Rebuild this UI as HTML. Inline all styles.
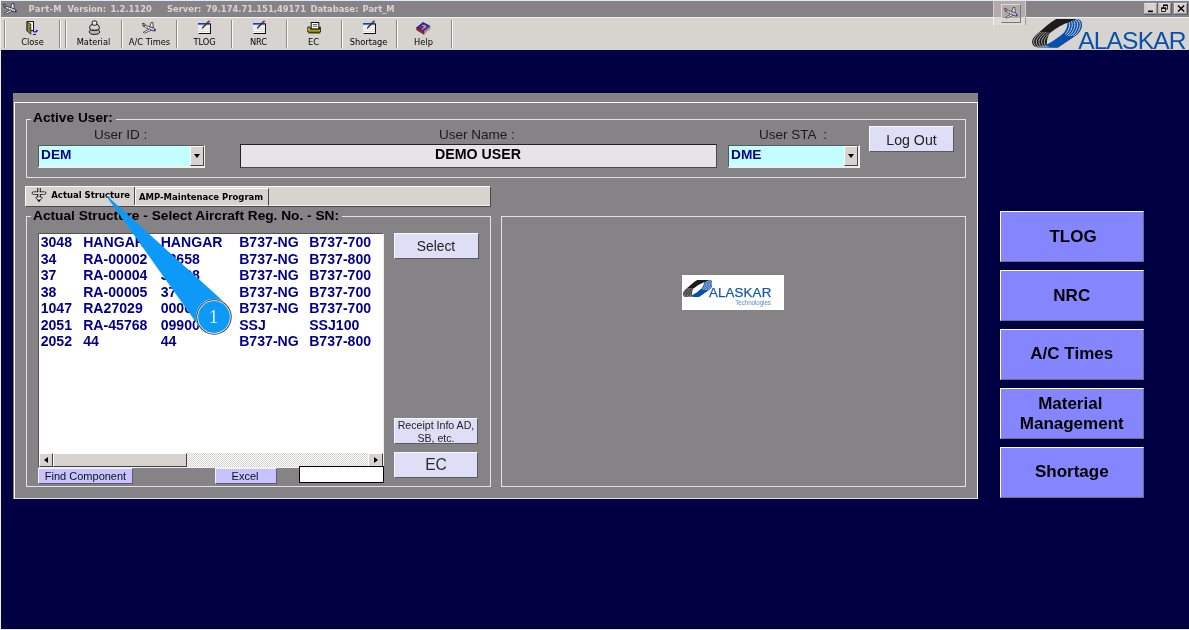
<!DOCTYPE html>
<html>
<head>
<meta charset="utf-8">
<title>Part-M</title>
<style>
html,body{margin:0;padding:0;}
body{width:1189px;height:630px;overflow:hidden;background:#000042;position:relative;will-change:transform;font-family:"Liberation Sans",sans-serif;}
.abs{position:absolute;box-sizing:border-box;}
#titlebar{left:0;top:0;width:1189px;height:17px;background:#858385;border-top:1.300px solid #dcebfa;}
#titletext{left:29px;top:2px;height:13px;line-height:13px;font-family:"DejaVu Sans Condensed","DejaVu Sans","Liberation Sans",sans-serif;font-weight:bold;font-size:9.3px;color:#d8d5d0;white-space:pre;}
#toolbar{left:0;top:17px;width:1189px;height:33px;background:#d7d4cf;border-top:1px solid #f4f3f1;}
.tb{top:20px;height:28px;width:55px;text-align:center;font-family:"DejaVu Sans Condensed","Liberation Sans",sans-serif;font-size:9.2px;color:#000;}
.tb span{position:absolute;left:0;right:0;top:16px;line-height:12px;}
.sep{top:20px;width:2px;height:28px;border-left:1px solid #8c8a86;border-right:1px solid #fbfaf9;}
.cap{top:3px;width:13px;height:11px;background:#d7d4cf;border:1px solid;border-color:#fff #404040 #404040 #fff;box-shadow:inset -1px -1px 0 #858385;}
#panel{left:13px;top:93px;width:965px;height:406px;background:#858385;}
.gb{border:1px solid #e4e2e4;}
.gbt{font-weight:bold;font-size:13.7px;color:#000;background:#858385;line-height:15px;white-space:pre;}
.lbl{font-size:13.500px;color:#1a1a1a;line-height:15px;white-space:pre;}
.combo{background:#c3ffff;border:1px solid #5a585a;border-right:2px solid #f1efee;border-bottom:2px solid #f1efee;font-weight:bold;font-size:13.700px;color:#00008b;line-height:18.500px;padding-left:2px;}
.drop{width:14px;background:#d7d4cf;border:1px solid;border-color:#fbfbfb #45434a #45434a #fbfbfb;}
.drop:after{content:"";position:absolute;left:2.500px;top:6.500px;border:3.500px solid transparent;border-top:4px solid #000;border-bottom:none;}
.btn{background:#dedff7;border:1px solid;border-color:#f8f8ff #5c5a5c #5c5a5c #f8f8ff;color:#222;text-align:center;}
.btn2{background:#c6c3ff;border:1px solid;border-color:#f2f2ff #5c5a6c #5c5a6c #f2f2ff;color:#111;text-align:center;font-size:11px;line-height:12px;}
.big{left:1000px;width:143.500px;height:50.500px;background:#8585ff;border:1.500px solid;border-color:#fdfdfd #6e6e78 #6e6e78 #fdfdfd;font-weight:bold;font-size:17px;color:#000;text-align:center;}
#list{left:38px;top:233px;width:346px;height:235px;background:#fff;border:1px solid;border-color:#555355 #efefef #efefef #555355;}
.row{left:40.700px;height:17px;line-height:17px;font-weight:bold;font-size:14.100px;color:#00008b;white-space:pre;}
.row i{font-style:normal;position:absolute;top:0;}
.tabt{font-family:"DejaVu Sans Condensed","Liberation Sans",sans-serif;font-weight:bold;font-size:9.450px;line-height:12px;color:#000;white-space:pre;}
.sb{background:#d7d4cf;border:1px solid;border-color:#fff #404040 #404040 #fff;}
</style>
</head>
<body>
<!-- title bar -->
<div id="titlebar" class="abs"></div>
<div id="titletext" class="abs" style="left:0;width:420px;"><span class="abs" style="left:28.600px;letter-spacing:.3px">Part-M</span><span class="abs" style="left:67.500px">Version:</span><span class="abs" style="left:110.500px">1.2.1120</span><span class="abs" style="left:167px">Server:</span><span class="abs" style="left:206px">79.174.71.151,49171</span><span class="abs" style="left:310.500px">Database:</span><span class="abs" style="left:362.500px">Part_M</span></div>
<!-- toolbar -->
<div id="toolbar" class="abs"></div>


<div class="abs sep" style="left:4px;"></div>
<div class="abs sep" style="left:59px;"></div>
<div class="abs sep" style="left:65px;"></div>
<div class="abs sep" style="left:121px;"></div>
<div class="abs sep" style="left:176px;"></div>
<div class="abs sep" style="left:231px;"></div>
<div class="abs sep" style="left:286px;"></div>
<div class="abs sep" style="left:341px;"></div>
<div class="abs sep" style="left:396px;"></div>
<div class="abs sep" style="left:451px;"></div>

<div class="abs tb" style="left:5px;"><svg class="abs" style="left:21px;top:1px" width="14" height="15" viewBox="0 0 14 15"><rect x="1" y=".6" width="6.500" height="9" fill="#fff" stroke="#111" stroke-width="1"/><path d="M1.200 1.200 L4.800 3 L4.800 13.200 L1.200 10.200 Z" fill="#8c8a1c" stroke="#222" stroke-width=".8"/><rect x="3.500" y="7" width=".9" height=".9" fill="#111"/><path d="M7 10.300 C8.500 11.300 10 11 11 10" stroke="#1a1ad8" stroke-width="1.200" fill="none"/><path d="M10 8.600 L12.200 9.600 L10.600 11.300 Z" fill="#1a1ad8"/><path d="M7 13.500h3" stroke="#1a1ad8" stroke-width="1.100"/></svg><span>Close</span></div>
<div class="abs tb" style="left:66px;"><svg class="abs" style="left:22px;top:0px" width="13" height="15" viewBox="0 0 13 15"><ellipse cx="6.500" cy="11.800" rx="5.200" ry="2.600" fill="#b8b8b8" stroke="#111" stroke-width="1"/><path d="M2.200 9.500 C1 7 2 5 4 4.500 L9 4.500 C11 5 12 7 10.800 9.500 C9 11 4 11 2.200 9.500Z" fill="#d4d4d4" stroke="#111" stroke-width="1"/><rect x="4.200" y="1" width="4.600" height="4.200" rx="1.300" fill="#ececec" stroke="#111" stroke-width="1"/><path d="M4 9.300 C5.500 10 7.500 10 9 9.300" stroke="#666" stroke-width=".9" fill="none"/></svg><span>Material</span></div>
<div class="abs tb" style="left:122px;"><svg class="abs" style="left:20px;top:2px" width="14" height="11.500" viewBox="0 0 14 11.500"><path d="M.4 1.300 L2.500 1.600 L4 4.300 L1.600 4.600 Z" fill="#c8c8c8" stroke="#222" stroke-width=".8"/><path d="M7.600 4.600 L9.200 .4 L10.900 .5 L11.200 5.800 Z" fill="#f0f0f0" stroke="#222" stroke-width=".8"/><path d="M1.400 3.600 C3 3.100 9 4.900 12.500 6.700 C14.300 7.700 14.100 9.100 12.500 9 C9 8.700 3 5.900 1.400 3.600Z" fill="#fff" stroke="#222" stroke-width=".8"/><path d="M7.400 6.900 L1.200 10.300 L2.800 11.100 L9.300 8.100 Z" fill="#fff" stroke="#333" stroke-width=".8"/><path d="M5.200 5.200 L11.200 7.700" stroke="#2828e0" stroke-width=".8" stroke-dasharray=".9 1"/><circle cx="12.600" cy="8" r=".9" fill="#2020e8"/></svg><span>A/C Times</span></div>
<div class="abs tb" style="left:177px;"><svg class="abs" style="left:21px;top:0px" width="14" height="14" viewBox="0 0 14 14"><rect x="0" y="3" width="12.500" height="10.500" fill="#fff"/><rect x="0" y="3" width="12.300" height="1.800" fill="#1a3ad8"/><rect x="0" y="4.800" width="12.300" height="1" fill="#b8e6f0"/><path d="M0 7.800h12M0 9.700h12M0 11.600h12" stroke="#cfcfcf" stroke-width=".8"/><path d="M12.500 3.500V13.500M.5 13.500H13" stroke="#111" stroke-width="1"/><path d="M4.700 7.600 L11 1.300" stroke="#3c3a10" stroke-width="1.500"/><path d="M10.200 2.100 L11.600 .7" stroke="#e01818" stroke-width="1.600"/><rect x="4" y="7.600" width="1" height="1" fill="#111"/></svg><span>TLOG</span></div>
<div class="abs tb" style="left:232px;"><svg class="abs" style="left:21px;top:0px" width="14" height="14" viewBox="0 0 14 14"><rect x="0" y="3" width="12.500" height="10.500" fill="#fff"/><rect x="0" y="3" width="12.300" height="1.800" fill="#1a3ad8"/><rect x="0" y="4.800" width="12.300" height="1" fill="#b8e6f0"/><path d="M0 7.800h12M0 9.700h12M0 11.600h12" stroke="#cfcfcf" stroke-width=".8"/><path d="M12.500 3.500V13.500M.5 13.500H13" stroke="#111" stroke-width="1"/><path d="M4.700 7.600 L11 1.300" stroke="#3c3a10" stroke-width="1.500"/><path d="M10.200 2.100 L11.600 .7" stroke="#e01818" stroke-width="1.600"/><rect x="4" y="7.600" width="1" height="1" fill="#111"/></svg><span style="left:-2px">NRC</span></div>
<div class="abs tb" style="left:287px;"><svg class="abs" style="left:20px;top:2px" width="14" height="12" viewBox="0 0 14 12"><rect x="4.200" y=".5" width="7.600" height="6.500" fill="#fff" stroke="#111" stroke-width="1"/><path d="M5.800 2.500h4.400M5.800 4.300h4.400" stroke="#555" stroke-width=".9"/><path d="M.8 5 H3.200 V7.300 H12.600 V5 H13.400 V10 H.8 Z" fill="#e2de10" stroke="#111" stroke-width=".9"/><path d="M1.500 10.800 H13.200" stroke="#3a3a00" stroke-width="1.400"/><path d="M2 8.700H12" stroke="#8c8a10" stroke-width=".8"/></svg><span style="left:-2px">EC</span></div>
<div class="abs tb" style="left:342px;"><svg class="abs" style="left:21px;top:0px" width="14" height="14" viewBox="0 0 14 14"><rect x="0" y="3" width="12.500" height="10.500" fill="#fff"/><rect x="0" y="3" width="12.300" height="1.800" fill="#1a3ad8"/><rect x="0" y="4.800" width="12.300" height="1" fill="#b8e6f0"/><path d="M0 7.800h12M0 9.700h12M0 11.600h12" stroke="#cfcfcf" stroke-width=".8"/><path d="M12.500 3.500V13.500M.5 13.500H13" stroke="#111" stroke-width="1"/><path d="M4.700 7.600 L11 1.300" stroke="#3c3a10" stroke-width="1.500"/><path d="M10.200 2.100 L11.600 .7" stroke="#e01818" stroke-width="1.600"/><rect x="4" y="7.600" width="1" height="1" fill="#111"/></svg><span style="left:-2px">Shortage</span></div>
<div class="abs tb" style="left:397px;"><svg class="abs" style="left:19px;top:2px" width="15" height="13" viewBox="0 0 15 13"><path d="M.8 5.500 L7 .6 L14 4.200 L8 9.600 Z" fill="#4a2cc8" stroke="#1a1470" stroke-width=".9"/><path d="M.8 5.500 L8 9.600 L8 12.200 L.8 8 Z" fill="#c02828" stroke="#401010" stroke-width=".7"/><path d="M8 9.600 L14 4.200 L14 6.600 L8 12.200 Z" fill="#f0f0f4" stroke="#444" stroke-width=".6"/><path d="M8.300 10.600 L13.800 5.500" stroke="#c02828" stroke-width=".7"/><text x="5.300" y="7.800" font-family="Liberation Sans,sans-serif" font-weight="bold" font-size="7.500" fill="#ffe818" transform="rotate(28 7 5)">?</text></svg><span style="left:-2px">Help</span></div>

<!-- title icon -->
<svg class="abs" style="left:3px;top:3px" width="14" height="11.500" viewBox="0 0 14 11.500"><path d="M.4 1.300 L2.500 1.600 L4 4.300 L1.600 4.600 Z" fill="#c8c8c8" stroke="#222" stroke-width=".8"/><path d="M7.600 4.600 L9.200 .4 L10.900 .5 L11.200 5.800 Z" fill="#f0f0f0" stroke="#222" stroke-width=".8"/><path d="M1.400 3.600 C3 3.100 9 4.900 12.500 6.700 C14.300 7.700 14.100 9.100 12.500 9 C9 8.700 3 5.900 1.400 3.600Z" fill="#fff" stroke="#222" stroke-width=".8"/><path d="M7.400 6.900 L1.200 10.300 L2.800 11.100 L9.300 8.100 Z" fill="#fff" stroke="#333" stroke-width=".8"/><path d="M5.200 5.200 L11.200 7.700" stroke="#2828e0" stroke-width=".8" stroke-dasharray=".9 1"/><circle cx="12.600" cy="8" r=".9" fill="#2020e8"/></svg>

<!-- floating plane button -->
<div class="abs" style="left:993px;top:1px;width:33px;height:16px;background:#b3abaa;border-left:1px solid #cfc9c8;border-right:1px solid #cfc9c8;"></div>
<div class="abs" style="left:993px;top:17px;width:33px;height:8px;background:#dedbd7;border-left:1px solid #f6f5f3;border-right:1px solid #9c9a96;"></div>
<div class="abs" style="left:1001px;top:3.500px;width:20px;height:19.500px;background:linear-gradient(#b2aaae 0,#b2aaae 13px,#dad6d2 13px);border:1px solid;border-color:#dedad8 #77757a #77757a #dedad8;"></div>
<svg class="abs" style="left:1003.500px;top:7px" width="14" height="11.500" viewBox="0 0 14 11.500" opacity=".85"><path d="M.4 1.300 L2.500 1.600 L4 4.300 L1.600 4.600 Z" fill="#c8c8c8" stroke="#222" stroke-width=".8"/><path d="M7.600 4.600 L9.200 .4 L10.900 .5 L11.200 5.800 Z" fill="#f0f0f0" stroke="#222" stroke-width=".8"/><path d="M1.400 3.600 C3 3.100 9 4.900 12.500 6.700 C14.300 7.700 14.100 9.100 12.500 9 C9 8.700 3 5.900 1.400 3.600Z" fill="#fff" stroke="#222" stroke-width=".8"/><path d="M7.400 6.900 L1.200 10.300 L2.800 11.100 L9.300 8.100 Z" fill="#fff" stroke="#333" stroke-width=".8"/><path d="M5.200 5.200 L11.200 7.700" stroke="#2828e0" stroke-width=".8" stroke-dasharray=".9 1"/><circle cx="12.600" cy="8" r=".9" fill="#2020e8"/></svg>

<!-- caption buttons -->
<svg class="abs" style="left:1139px;top:0" width="50" height="17" viewBox="0 0 50 17">
<g>
<rect x="5.300" y="2.900" width="13.200" height="11.600" fill="#45434a"/><rect x="5.300" y="2.900" width="12.400" height="10.800" fill="#fff"/><rect x="6.200" y="3.800" width="11.500" height="9.900" fill="#86848a"/><rect x="6.200" y="3.800" width="10.700" height="9.100" fill="#d7d4cf"/>
<rect x="9" y="10.500" width="4.900" height="1.700" fill="#000"/>
<rect x="19.400" y="2.900" width="13.200" height="11.600" fill="#45434a"/><rect x="19.400" y="2.900" width="12.400" height="10.800" fill="#fff"/><rect x="20.300" y="3.800" width="11.500" height="9.900" fill="#86848a"/><rect x="20.300" y="3.800" width="10.700" height="9.100" fill="#d7d4cf"/>
<rect x="24.600" y="5.200" width="3.800" height="3.900" fill="none" stroke="#000" stroke-width=".8"/><rect x="24.200" y="4.600" width="4.600" height="1.400" fill="#000"/>
<rect x="22.700" y="8" width="3.800" height="3.500" fill="#d7d4cf" stroke="#000" stroke-width=".8"/><rect x="22.300" y="7.400" width="4.600" height="1.400" fill="#000"/>
<rect x="34.900" y="2.900" width="13.900" height="11.600" fill="#45434a"/><rect x="34.900" y="2.900" width="13.100" height="10.800" fill="#fff"/><rect x="35.800" y="3.800" width="12.200" height="9.900" fill="#86848a"/><rect x="35.800" y="3.800" width="11.400" height="9.100" fill="#d7d4cf"/>
<path d="M39 5.400 L45.200 11.500 M45.200 5.400 L39 11.500" stroke="#000" stroke-width="1.400"/>
</g>
</svg>

<!-- Alaskar logo top right -->
<svg class="abs" style="left:1025px;top:15px" width="70" height="37" viewBox="0 0 1189 628">
<defs>
<clipPath id="lgOuter"><path d="M530,68 L880,68 C940,75 965,115 965,165 C965,230 925,300 880,335 L560,552 L205,549 C150,545 120,505 120,452 C120,400 170,350 230,300 C320,225 420,130 530,68 Z"/></clipPath>
<clipPath id="lgBlue"><path d="M885,68 L722,132 L372,500 L205,549 L205,700 L1300,700 L1300,-100 L885,-100 Z"/></clipPath>
<clipPath id="lgL"><path d="M0,300 L300,285 L440,300 L440,700 L0,700 Z"/></clipPath>
<clipPath id="lgR"><path d="M1300,0 L640,0 L640,300 L720,355 L1300,340 Z"/></clipPath>
</defs>
<path d="M530,68 L880,68 C940,75 965,115 965,165 C965,230 925,300 880,335 L560,552 L205,549 C150,545 120,505 120,452 C120,400 170,350 230,300 C320,225 420,130 530,68 Z" fill="#1c1a1a"/>
<g clip-path="url(#lgBlue)"><path d="M530,68 L880,68 C940,75 965,115 965,165 C965,230 925,300 880,335 L560,552 L205,549 C150,545 120,505 120,452 C120,400 170,350 230,300 C320,225 420,130 530,68 Z" fill="#0651ad"/></g>
<path d="M722,132 C600,180 490,250 425,305 C385,360 362,440 372,500 C480,440 590,370 660,300 C705,250 722,190 722,132 Z" fill="#d7d4cf"/>
<g clip-path="url(#lgOuter)">
<g clip-path="url(#lgL)">
<path d="M357,215 C257,300 147,380 147,452 C147,505 177,545 232,549" fill="none" stroke="#d7d4cf" stroke-width="13"/>
<path d="M402,215 C302,300 192,380 192,452 C192,505 222,545 277,549" fill="none" stroke="#d7d4cf" stroke-width="13"/>
<path d="M447,215 C347,300 237,380 237,452 C237,505 267,545 322,549" fill="none" stroke="#d7d4cf" stroke-width="13"/>
<path d="M492,215 C392,300 282,380 282,452 C282,505 312,545 367,549" fill="none" stroke="#d7d4cf" stroke-width="13"/>
<path d="M537,215 C437,300 327,380 327,452 C327,505 357,545 412,549" fill="none" stroke="#d7d4cf" stroke-width="13"/>
</g>
<g clip-path="url(#lgR)"><g clip-path="url(#lgBlue)">
<path d="M853,68 C913,75 938,115 938,165 C938,230 898,300 853,335 L773,392" fill="none" stroke="#d7d4cf" stroke-width="16"/>
<path d="M808,68 C868,75 893,115 893,165 C893,230 853,300 808,335 L728,392" fill="none" stroke="#d7d4cf" stroke-width="16"/>
<path d="M763,68 C823,75 848,115 848,165 C848,230 808,300 763,335 L683,392" fill="none" stroke="#d7d4cf" stroke-width="16"/>
<path d="M718,68 C778,75 803,115 803,165 C803,230 763,300 718,335 L638,392" fill="none" stroke="#d7d4cf" stroke-width="16"/>
<path d="M673,68 C733,75 758,115 758,165 C758,230 718,300 673,335 L593,392" fill="none" stroke="#d7d4cf" stroke-width="16"/>
</g></g>
</g>
</svg>
<svg class="abs" style="left:1070px;top:22px" width="119" height="28" viewBox="0 0 119 28">
<text x="8.200" y="26.800" font-family="Liberation Sans, sans-serif" font-size="24.600" fill="#0651ad" textLength="108.300" lengthAdjust="spacing">ALASKAR</text>
</svg>

<!-- main panel -->
<div id="panel" class="abs"></div>
<div class="abs" style="left:14px;top:102px;width:964px;height:397px;border:1px solid #fbfbfb;border-bottom-color:#dcdcec;"></div>
<div class="abs" style="left:0;top:0;width:1px;height:630px;background:#eeeef2;"></div>
<div class="abs" style="left:0;top:629px;width:1189px;height:1px;background:#e6e6ee;"></div>

<!-- Active user group -->
<div class="abs gb" style="left:26px;top:119px;width:940px;height:59px;"></div>
<div class="abs gbt" style="left:31px;top:110.300px;padding:0 3px 0 2px;">Active User:</div>
<div class="abs lbl" style="left:94px;top:127px;">User ID :</div>
<div class="abs lbl" style="left:439px;top:127px;">User Name :</div>
<div class="abs lbl" style="left:759px;top:127px;">User STA  :</div>

<div class="abs combo" style="left:38px;top:145px;width:167px;height:23px;">DEM</div>
<div class="abs drop" style="left:190px;top:146px;height:20px;"></div>

<div class="abs" style="left:240px;top:144px;width:477px;height:24px;background:#e7e3e7;border:1px solid #222;border-right-color:#4a484a;border-bottom:1.500px solid #4a484a;font-weight:bold;font-size:14.200px;line-height:18px;color:#000;text-align:center;padding-right:1px;">DEMO USER</div>

<div class="abs combo" style="left:728px;top:145px;width:132px;height:23px;">DME</div>
<div class="abs drop" style="left:844px;top:146px;height:20px;"></div>

<div class="abs btn" style="left:869px;top:126px;width:85px;height:26px;font-size:14.200px;line-height:26px;">Log Out</div>

<!-- tab strip -->
<div class="abs" style="left:25px;top:186px;width:466px;height:21px;background:#d7d4cf;border:1px solid;border-color:#f8f8f8 #4a484a #4a484a #f8f8f8;box-shadow:inset 0 -1px 0 #f4f3f1;"></div>
<div class="abs" style="left:134px;top:187px;width:1px;height:18px;background:#4a484a;"></div>
<div class="abs" style="left:135px;top:188px;width:134px;height:18px;border:1px solid;border-color:#fff #4a484a transparent #fff;"></div>
<div class="abs" style="left:26px;top:204px;width:108px;height:2px;background:#d7d4cf;"></div>
<svg class="abs" style="left:31px;top:187px" width="16" height="15" viewBox="0 0 16 15"><path d="M7.100 3.500 H8.900 V13.200 L8 14.200 L7.100 13.200 Z" fill="#f4f4f4"/><path d="M2.300 4.900 H13.700 A1.200 1.200 0 0 1 13.700 7.300 H2.300 A1.200 1.200 0 0 1 2.300 4.900 Z" fill="#fff" stroke="#111" stroke-width=".9"/><path d="M5.500 10 H10.500 L11.300 10.800 L9.500 12.600 H6.500 L4.700 10.800 Z" fill="#f4f4f4" stroke="#111" stroke-width=".9"/><path d="M6.900 .9 V4.900 M9.100 .9 V4.900 M6.900 7.300 V10 M9.100 7.300 V10 M6.900 12.600 L8 14.400 L9.100 12.600" fill="none" stroke="#000" stroke-width="1.200"/><path d="M7.450 1.200 H8.550 V13 H7.450Z" fill="#e8e8e8"/></svg>
<div class="abs tabt" style="left:51.300px;top:189px;">Actual Structure</div>
<div class="abs tabt" style="left:139px;top:191px;">AMP-Maintenace Program</div>

<!-- Actual structure group -->
<div class="abs gb" style="left:26px;top:216px;width:465px;height:271px;"></div>
<div class="abs gbt" style="left:31px;top:208px;padding:0 3px 0 2px;">Actual Structure - Select Aircraft Reg. No. - SN:</div>

<div id="list" class="abs"></div>
<div class="abs row" style="top:234.2px;">3048<i style="left:42.500px">HANGAR</i><i style="left:120px">HANGAR</i><i style="left:198.500px">B737-NG</i><i style="left:268.500px">B737-700</i></div>
<div class="abs row" style="top:250.7px;">34<i style="left:42.500px">RA-00002</i><i style="left:120px">32658</i><i style="left:198.500px">B737-NG</i><i style="left:268.500px">B737-800</i></div>
<div class="abs row" style="top:267.2px;">37<i style="left:42.500px">RA-00004</i><i style="left:120px">32738</i><i style="left:198.500px">B737-NG</i><i style="left:268.500px">B737-700</i></div>
<div class="abs row" style="top:283.7px;">38<i style="left:42.500px">RA-00005</i><i style="left:120px">37660</i><i style="left:198.500px">B737-NG</i><i style="left:268.500px">B737-700</i></div>
<div class="abs row" style="top:300.2px;">1047<i style="left:42.500px">RA27029</i><i style="left:120px">00001</i><i style="left:198.500px">B737-NG</i><i style="left:268.500px">B737-700</i></div>
<div class="abs row" style="top:316.7px;">2051<i style="left:42.500px">RA-45768</i><i style="left:120px">09900</i><i style="left:198.500px">SSJ</i><i style="left:268.500px">SSJ100</i></div>
<div class="abs row" style="top:333.2px;">2052<i style="left:42.500px">44</i><i style="left:120px">44</i><i style="left:198.500px">B737-NG</i><i style="left:268.500px">B737-800</i></div>

<!-- h scrollbar -->
<div class="abs" style="left:39px;top:452.500px;width:344px;height:14px;background-color:#d7d4cf;background-image:linear-gradient(45deg,#fff 25%,transparent 25%,transparent 75%,#fff 75%),linear-gradient(45deg,#fff 25%,transparent 25%,transparent 75%,#fff 75%);background-size:2px 2px;background-position:0 0,1px 1px;"></div>
<div class="abs sb" style="left:39px;top:452.500px;width:14px;height:14px;"><div class="abs" style="left:4px;top:3px;border:3.500px solid transparent;border-right:4px solid #000;border-left:none;"></div></div>
<div class="abs sb" style="left:53px;top:452.500px;width:134px;height:14px;"></div>
<div class="abs sb" style="left:368px;top:452.500px;width:15px;height:14px;"><div class="abs" style="left:5px;top:3px;border:3.500px solid transparent;border-left:4px solid #000;border-right:none;"></div></div>

<div class="abs btn" style="left:394px;top:233px;width:85px;height:26px;font-size:13.800px;line-height:26px;padding-right:1px;">Select</div>
<div class="abs btn" style="left:394px;top:418px;width:84px;height:26px;font-size:10.600px;line-height:12.700px;padding-top:0;white-space:nowrap;">Receipt Info AD,<br>SB, etc.</div>
<div class="abs btn" style="left:394px;top:452px;width:84px;height:26px;font-size:15.600px;line-height:24.500px;color:#2c2c2c;">EC</div>

<div class="abs btn2" style="left:38px;top:468px;width:95px;height:16px;line-height:14.500px;">Find Component</div>
<div class="abs btn2" style="left:215px;top:468px;width:62px;height:16px;line-height:14.500px;padding-right:2px;">Excel</div>
<div class="abs" style="left:299px;top:466px;width:85px;height:17px;background:#fff;border:1px solid #000;"></div>

<!-- right group -->
<div class="abs gb" style="left:501px;top:216px;width:465px;height:271px;"></div>
<div class="abs" style="left:682px;top:274.700px;width:102px;height:35px;background:#fff;"></div>
<svg class="abs" style="left:682.600px;top:279.700px" width="29.400" height="17.300" viewBox="120 68 845 484" preserveAspectRatio="none">
<defs>
<clipPath id="lgOuterB"><path d="M530,68 L880,68 C940,75 965,115 965,165 C965,230 925,300 880,335 L560,552 L205,549 C150,545 120,505 120,452 C120,400 170,350 230,300 C320,225 420,130 530,68 Z"/></clipPath>
<clipPath id="lgBlueB"><path d="M885,68 L722,132 L372,500 L205,549 L205,700 L1300,700 L1300,-100 L885,-100 Z"/></clipPath>
<clipPath id="lgLB"><path d="M0,300 L300,285 L440,300 L440,700 L0,700 Z"/></clipPath>
<clipPath id="lgRB"><path d="M1300,0 L640,0 L640,300 L720,355 L1300,340 Z"/></clipPath>
</defs>
<path d="M530,68 L880,68 C940,75 965,115 965,165 C965,230 925,300 880,335 L560,552 L205,549 C150,545 120,505 120,452 C120,400 170,350 230,300 C320,225 420,130 530,68 Z" fill="#1c1a1a"/>
<g clip-path="url(#lgBlueB)"><path d="M530,68 L880,68 C940,75 965,115 965,165 C965,230 925,300 880,335 L560,552 L205,549 C150,545 120,505 120,452 C120,400 170,350 230,300 C320,225 420,130 530,68 Z" fill="#0651ad"/></g>
<path d="M722,132 C600,180 490,250 425,305 C385,360 362,440 372,500 C480,440 590,370 660,300 C705,250 722,190 722,132 Z" fill="#ffffff"/>
<g clip-path="url(#lgOuterB)">
<g clip-path="url(#lgLB)">
<path d="M357,215 C257,300 147,380 147,452 C147,505 177,545 232,549" fill="none" stroke="#ffffff" stroke-width="13"/>
<path d="M402,215 C302,300 192,380 192,452 C192,505 222,545 277,549" fill="none" stroke="#ffffff" stroke-width="13"/>
<path d="M447,215 C347,300 237,380 237,452 C237,505 267,545 322,549" fill="none" stroke="#ffffff" stroke-width="13"/>
<path d="M492,215 C392,300 282,380 282,452 C282,505 312,545 367,549" fill="none" stroke="#ffffff" stroke-width="13"/>
<path d="M537,215 C437,300 327,380 327,452 C327,505 357,545 412,549" fill="none" stroke="#ffffff" stroke-width="13"/>
</g>
<g clip-path="url(#lgRB)"><g clip-path="url(#lgBlueB)">
<path d="M853,68 C913,75 938,115 938,165 C938,230 898,300 853,335 L773,392" fill="none" stroke="#ffffff" stroke-width="16"/>
<path d="M808,68 C868,75 893,115 893,165 C893,230 853,300 808,335 L728,392" fill="none" stroke="#ffffff" stroke-width="16"/>
<path d="M763,68 C823,75 848,115 848,165 C848,230 808,300 763,335 L683,392" fill="none" stroke="#ffffff" stroke-width="16"/>
<path d="M718,68 C778,75 803,115 803,165 C803,230 763,300 718,335 L638,392" fill="none" stroke="#ffffff" stroke-width="16"/>
<path d="M673,68 C733,75 758,115 758,165 C758,230 718,300 673,335 L593,392" fill="none" stroke="#ffffff" stroke-width="16"/>
</g></g>
</g>
</svg>
<div class="abs" style="left:709px;top:285.500px;width:66px;height:13px;line-height:13px;font-size:13.300px;letter-spacing:.15px;color:#1458ae;white-space:pre;-webkit-text-stroke:.25px #1458ae;">ALASKAR</div>
<div class="abs" style="left:735.300px;top:299px;width:40px;height:8px;line-height:8px;font-size:6.300px;letter-spacing:-.1px;color:#5a8cc8;white-space:pre;">Technologies</div>


<!-- big buttons -->
<div class="abs big" style="top:211.300px;line-height:50px;padding-left:2.500px;">TLOG</div>
<div class="abs big" style="top:270.300px;line-height:50.500px;">NRC</div>
<div class="abs big" style="top:329.300px;line-height:48px;">A/C Times</div>
<div class="abs big" style="top:388.300px;line-height:19.300px;padding-top:5px;"><span style="position:relative;left:-1.500px">Material</span><br>Management</div>
<div class="abs big" style="top:447px;line-height:48px;">Shortage</div>

<!-- annotation -->
<svg class="abs" style="left:0;top:0;pointer-events:none" width="1189" height="630" viewBox="0 0 1189 630">
<path d="M104.500 193.500 L225.960 303.830 L199.480 327.310 Z" fill="#0c99f8"/>
<circle cx="214" cy="317" r="18.300" fill="#fff" fill-opacity=".55"/>
<circle cx="214" cy="317" r="17.700" fill="#3c3c3c"/>
<circle cx="214" cy="317" r="16.700" fill="#fff"/>
<circle cx="214" cy="317" r="15.900" fill="#0c99f8"/>
<text x="213.400" y="323.400" text-anchor="middle" font-family="Liberation Serif, serif" font-size="18" fill="#fff">1</text>
</svg>

</body>
</html>
